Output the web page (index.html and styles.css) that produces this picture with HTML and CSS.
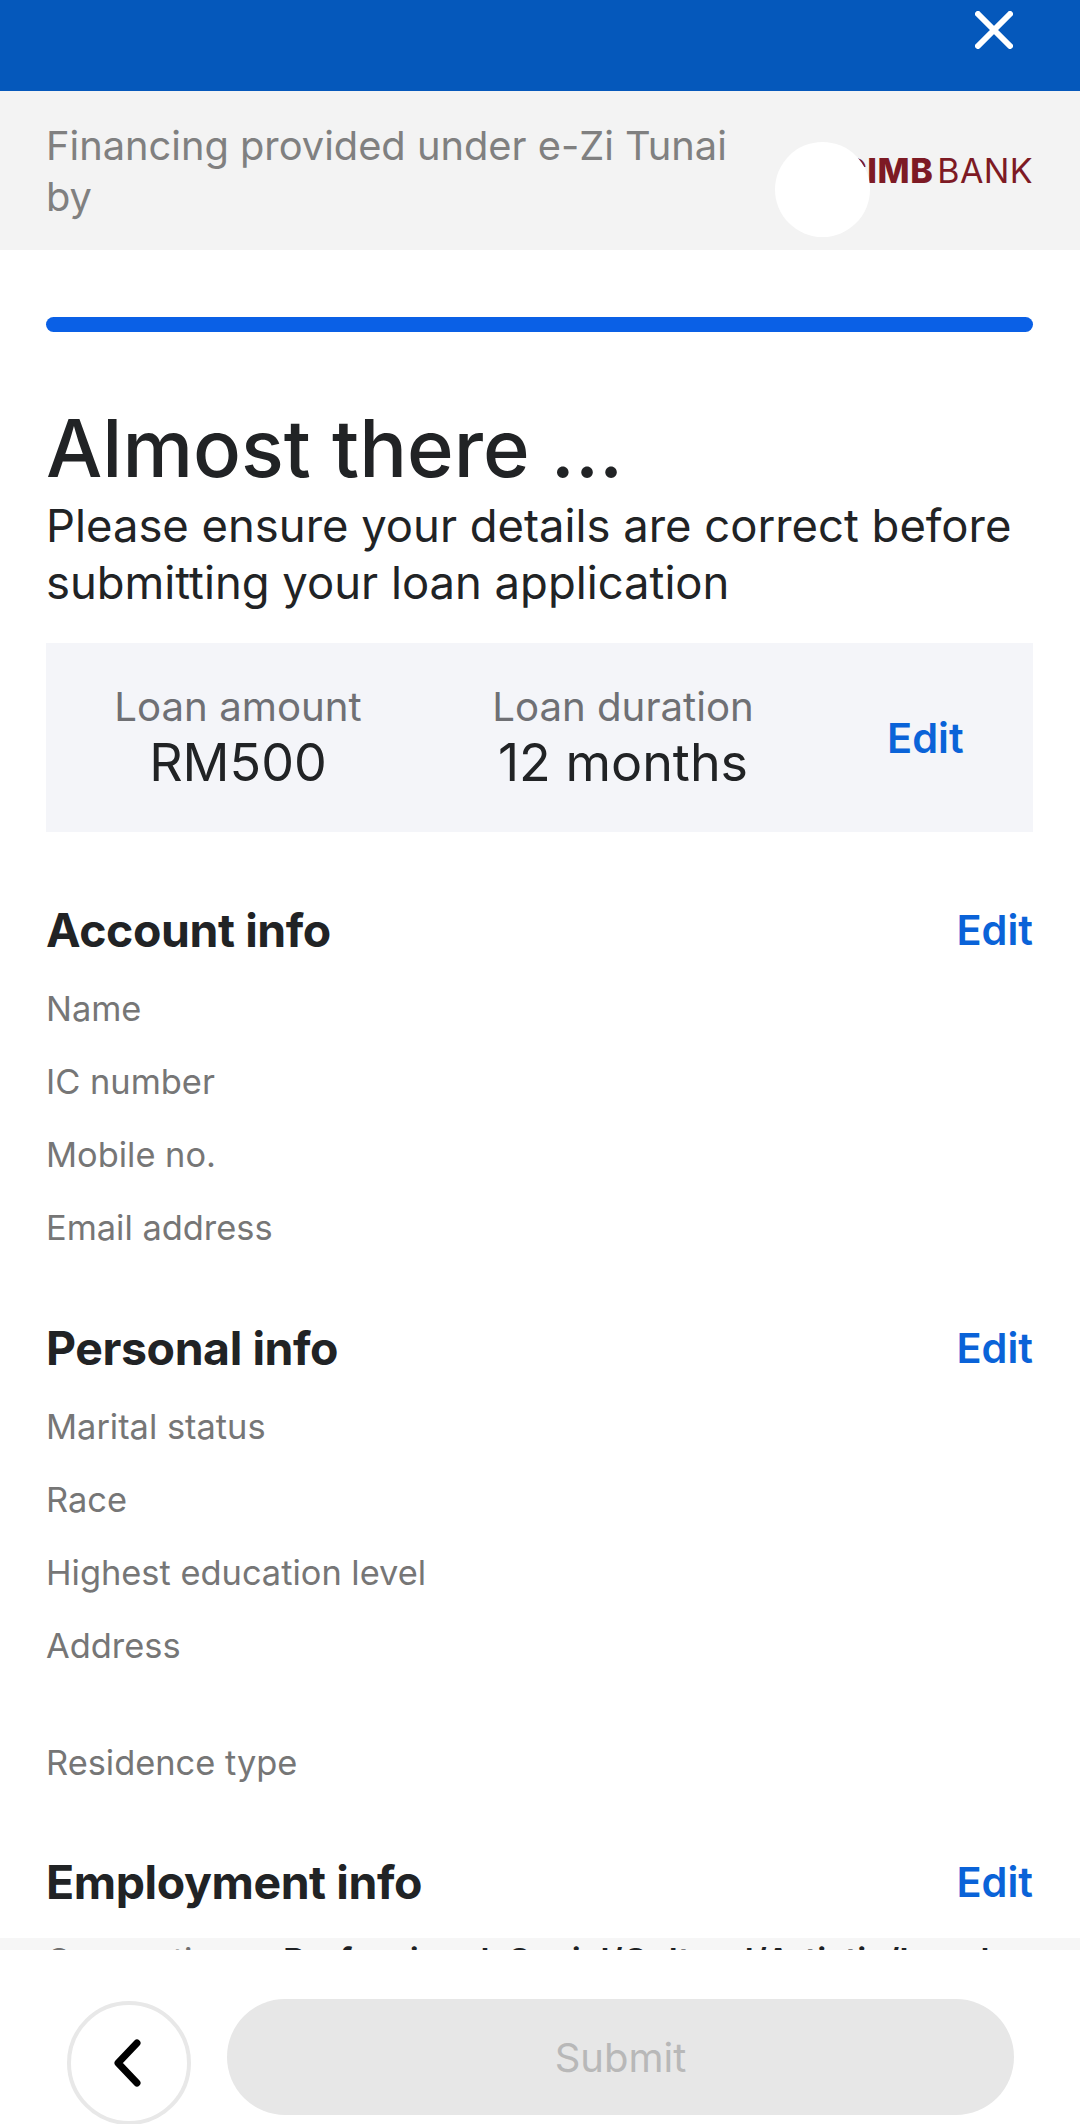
FILE: index.html
```html
<!DOCTYPE html>
<html lang="en">
<head>
  <meta charset="UTF-8">
  <meta name="viewport" content="width=device-width, initial-scale=1.0">
  <title>Almost there</title>
  <link rel="stylesheet" href="styles.css">
</head>
<body>
  <div class="app">
    <header class="top-bar">
      <svg class="close-icon" viewBox="0 0 38 38" aria-label="Close">
        <path d="M3 3 L35 35 M35 3 L3 35"></path>
      </svg>
    </header>

    <div class="provider">
      <p class="provider-text">Financing provided under e-Zi Tunai by</p>
      <div class="provider-logo"><b>CIMB</b><span>BANK</span></div>
      <div class="logo-cover"></div>
    </div>

    <main class="content">
      <div class="progress"></div>

      <h1>Almost there ...</h1>
      <p class="intro">Please ensure your details are correct before submitting your loan application</p>

      <section class="loan-box">
        <div class="loan-item loan-amount">
          <span class="loan-label">Loan amount</span>
          <span class="loan-value">RM500</span>
        </div>
        <div class="loan-item loan-duration">
          <span class="loan-label">Loan duration</span>
          <span class="loan-value">12 months</span>
        </div>
        <a class="edit loan-edit">Edit</a>
      </section>

      <section class="info account">
        <div class="info-head"><h2>Account info</h2><a class="edit">Edit</a></div>
        <p class="row">Name</p>
        <p class="row">IC number</p>
        <p class="row">Mobile no.</p>
        <p class="row">Email address</p>
      </section>

      <section class="info personal">
        <div class="info-head"><h2>Personal info</h2><a class="edit">Edit</a></div>
        <p class="row">Marital status</p>
        <p class="row">Race</p>
        <p class="row">Highest education level</p>
        <p class="row row-address">Address</p>
        <p class="row">Residence type</p>
      </section>

      <section class="info employment">
        <div class="info-head"><h2>Employment info</h2><a class="edit">Edit</a></div>
        <p class="row row-cut"><span>Occupation</span><b>Professional, Social/Cultural/Artistic/Legal</b></p>
      </section>
    </main>

    <footer class="actions">
      <button class="back" aria-label="Back">
        <svg viewBox="0 0 30 48"><path d="M23 4 L4 24 L23 44"></path></svg>
      </button>
      <button class="submit">Submit</button>
    </footer>
  </div>
</body>
</html>
```

FILE: styles.css
```css
* {
  box-sizing: border-box;
}

body {
  margin: 0;
  font-family: Inter, "Noto Sans", sans-serif;
  background-color: #fff;
  color: #212325;
}

.app {
  display: flex;
  flex-direction: column;
  height: 2124px;
  overflow: hidden;
}

.top-bar {
  display: flex;
  justify-content: flex-end;
  align-items: flex-start;
  flex: none;
  height: 91px;
  padding: 11px 67px 0 0;
  background-color: #0558bb;
}

.close-icon {
  width: 38px;
  height: 38px;
}

.close-icon path {
  fill: none;
  stroke: #fff;
  stroke-width: 6;
  stroke-linecap: round;
}

.provider {
  position: relative;
  display: flex;
  justify-content: space-between;
  align-items: center;
  flex: none;
  height: 159px;
  padding: 0 47px 0 46px;
  background-color: #f3f3f3;
}

.provider-text {
  width: 700px;
  margin: 0;
  font-size: 39.8px;
  line-height: 51px;
  color: #808080;
}

.provider-logo {
  font-size: 34px;
  color: #7d1a24;
}

.provider-logo b {
  font-weight: 800;
  letter-spacing: 0.5px;
  margin-right: 4px;
}

.provider-logo span {
  font-weight: 400;
  letter-spacing: 0.4px;
}

.logo-cover {
  position: absolute;
  left: 775px;
  top: 51px;
  width: 95px;
  height: 95px;
  border-radius: 50%;
  background-color: #fff;
}

.content {
  flex: 1;
  min-height: 0;
  padding: 67px 47px 0 46px;
  overflow: hidden;
}

.progress {
  height: 15px;
  border-radius: 8px;
  background-color: #0a60e6;
}

h1 {
  margin: 68px 0 0;
  font-size: 79.5px;
  line-height: 97px;
  font-weight: 500;
}

.intro {
  margin: 0;
  font-size: 45.4px;
  line-height: 57px;
}

.loan-box {
  display: flex;
  align-items: center;
  height: 189px;
  margin-top: 32px;
  background-color: #f4f5f9;
}

.loan-item {
  display: flex;
  flex-direction: column;
  align-items: center;
}

.loan-amount {
  width: 384px;
}

.loan-duration {
  width: 386px;
}

.loan-label {
  font-size: 40.2px;
  line-height: 50px;
  color: #6f7074;
}

.loan-value {
  font-size: 52px;
  line-height: 62px;
}

.edit {
  font-size: 41.5px;
  font-weight: 600;
  color: #0a63d8;
}

.loan-edit {
  margin-left: 71px;
}

.account {
  padding-top: 68px;
}

.personal {
  padding-top: 54px;
}

.employment {
  padding-top: 53px;
}

.info-head {
  display: flex;
  justify-content: space-between;
  align-items: center;
  height: 60px;
  margin-bottom: 12px;
}

h2 {
  margin: 0;
  font-size: 46.4px;
  font-weight: 700;
  letter-spacing: -0.4px;
}

.row {
  display: flex;
  align-items: center;
  height: 73px;
  margin: 0;
  font-size: 34.4px;
  color: #767676;
}

.row-address {
  height: 117px;
  align-items: flex-start;
  padding-top: 16px;
}

.row-cut span {
  flex: none;
  width: 237px;
}

.row-cut b {
  font-weight: 600;
  color: #212325;
  white-space: nowrap;
}

.actions {
  position: relative;
  display: flex;
  align-items: flex-start;
  flex: none;
  height: 174px;
  padding: 49px 66px 0 67px;
  gap: 36px;
  background-color: #fff;
}

/* faint band that the scrolled text shows through */
.actions::before {
  content: "";
  position: absolute;
  left: 0;
  right: 0;
  top: -12px;
  height: 12px;
  background-color: rgba(0, 0, 0, 0.035);
}

.back {
  display: flex;
  justify-content: center;
  align-items: center;
  flex: none;
  width: 124px;
  height: 124px;
  margin-top: 2px;
  padding: 0;
  border: 4px solid #e8e8e8;
  border-radius: 50%;
  background-color: #fff;
}

.back svg {
  width: 30px;
  height: 48px;
}

.back path {
  fill: none;
  stroke: #000;
  stroke-width: 7;
  stroke-linecap: round;
  stroke-linejoin: round;
}

.submit {
  flex: 1;
  height: 116px;
  border: none;
  border-radius: 58px;
  background-color: #e7e7e7;
  font-family: inherit;
  font-size: 40px;
  color: #b8b8b8;
}
```
